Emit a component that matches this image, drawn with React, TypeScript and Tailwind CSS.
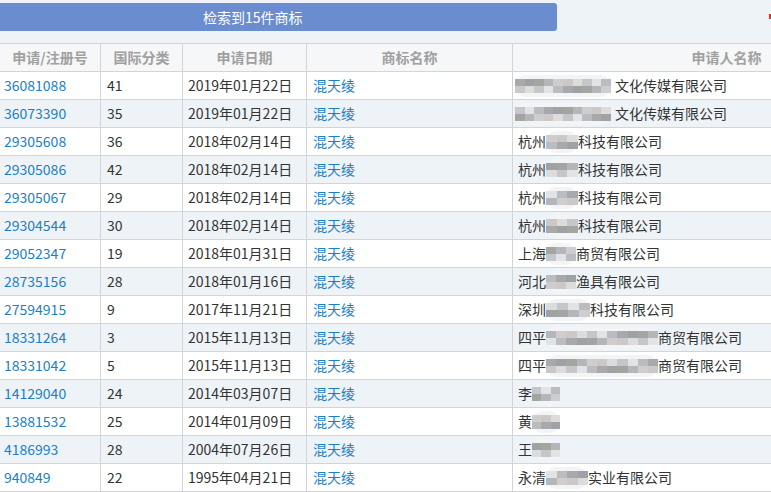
import React from "react"

type Row = {
  no: string
  cls: string
  date: string
  pre: string
  blur: number
  post: string
}

const rows: Row[] = [
  { no: "36081088", cls: "41", date: "2019年01月22日", pre: "", blur: 96, post: "文化传媒有限公司" },
  { no: "36073390", cls: "35", date: "2019年01月22日", pre: "", blur: 96, post: "文化传媒有限公司" },
  { no: "29305608", cls: "36", date: "2018年02月14日", pre: "杭州", blur: 32, post: "科技有限公司" },
  { no: "29305086", cls: "42", date: "2018年02月14日", pre: "杭州", blur: 32, post: "科技有限公司" },
  { no: "29305067", cls: "29", date: "2018年02月14日", pre: "杭州", blur: 32, post: "科技有限公司" },
  { no: "29304544", cls: "30", date: "2018年02月14日", pre: "杭州", blur: 32, post: "科技有限公司" },
  { no: "29052347", cls: "19", date: "2018年01月31日", pre: "上海", blur: 30, post: "商贸有限公司" },
  { no: "28735156", cls: "28", date: "2018年01月16日", pre: "河北", blur: 30, post: "渔具有限公司" },
  { no: "27594915", cls: "9", date: "2017年11月21日", pre: "深圳", blur: 44, post: "科技有限公司" },
  { no: "18331264", cls: "3", date: "2015年11月13日", pre: "四平", blur: 112, post: "商贸有限公司" },
  { no: "18331042", cls: "5", date: "2015年11月13日", pre: "四平", blur: 112, post: "商贸有限公司" },
  { no: "14129040", cls: "24", date: "2014年03月07日", pre: "李", blur: 28, post: "" },
  { no: "13881532", cls: "25", date: "2014年01月09日", pre: "黄", blur: 28, post: "" },
  { no: "4186993", cls: "28", date: "2004年07月26日", pre: "王", blur: 28, post: "" },
  { no: "940849", cls: "22", date: "1995年04月21日", pre: "永清", blur: 42, post: "实业有限公司" },
]

const grays = ["#a9a9ab", "#c4c6c9", "#cfcdcd", "#9fa2a4", "#e2e3e5", "#cdc8c8", "#a4a4a0", "#b9bcc1", "#dcdcdc", "#b4b7ba"]

function Mosaic({ width, seed }: { width: number; seed: number }) {
  const count = Math.max(2, Math.round(width / 10))
  return (
    <span
      className="inline-flex items-center h-[22px] rounded-full bg-[#f3f4f5] align-middle blur-[0.4px]"
      style={{ width }}
    >
      <span className="flex flex-col w-full">
        {[0, 1].map((r) => (
          <span key={r} className="flex w-full">
            {Array.from({ length: count }).map((_, i) => (
              <span
                key={i}
                className="h-[7px] flex-1"
                style={{ background: grays[(i * 3 + seed + r * 5) % grays.length] }}
              />
            ))}
          </span>
        ))}
      </span>
    </span>
  )
}

export default function App() {
  return (
    <div
      className="w-[771px] h-[492px] overflow-hidden bg-[#eef3f8] text-[14px] relative"
      style={{ fontFamily: '"Noto Sans CJK SC", "Noto Sans", sans-serif' }}
    >
      {/* result banner */}
      <div className="pt-[3px] h-[43px]">
        <div className="w-[557px] h-[28px] bg-[#6a8dd0] rounded-r-[3px] flex items-center pl-[203px] text-white text-[14px]">
          检索到15件商标
        </div>
      </div>
      <span className="absolute right-0 top-[14px] w-[2px] h-[5px] bg-[#e8322a]" />

      <div className="w-[940px] border-t border-[#d4d4d4]">
        {/* header */}
        <div className="grid grid-cols-[100px_82px_124px_206px_428px] h-[28px] bg-[#f6f7f8] border-b border-[#d4d4d4] font-bold text-[#a0a0a0]">
          <div className="flex items-center justify-center">申请/注册号</div>
          <div className="flex items-center justify-center border-l border-[#d4d4d4]">国际分类</div>
          <div className="flex items-center justify-center border-l border-[#d4d4d4]">申请日期</div>
          <div className="flex items-center justify-center border-l border-[#d4d4d4]">商标名称</div>
          <div className="flex items-center justify-center border-l border-[#d4d4d4]">申请人名称</div>
        </div>

        {rows.map((r, idx) => (
          <div
            key={r.no}
            className={`grid grid-cols-[100px_82px_124px_206px_428px] h-[28px] border-b border-[#d4d4d4] ${
              idx % 2 === 0 ? "bg-white" : "bg-[#eef3f8]"
            }`}
          >
            <div className="flex items-center pl-[4px] text-[#1b7fc4]">{r.no}</div>
            <div className="flex items-center pl-[6px] border-l border-[#d4d4d4] text-[#333]">{r.cls}</div>
            <div className="flex items-center pl-[5px] border-l border-[#d4d4d4] text-[#333]">{r.date}</div>
            <div className="flex items-center pl-[6px] border-l border-[#d4d4d4] text-[#1b7fc4]">混天绫</div>
            <div
              className={`flex items-center border-l border-[#d4d4d4] text-[#333] whitespace-nowrap ${
                r.pre ? "pl-[5px]" : "pl-[2px]"
              }`}
            >
              {r.pre}
              <Mosaic width={r.blur} seed={idx} />
              {r.post && <span className={r.pre ? "" : "ml-[4px]"}>{r.post}</span>}
            </div>
          </div>
        ))}
      </div>
    </div>
  )
}
